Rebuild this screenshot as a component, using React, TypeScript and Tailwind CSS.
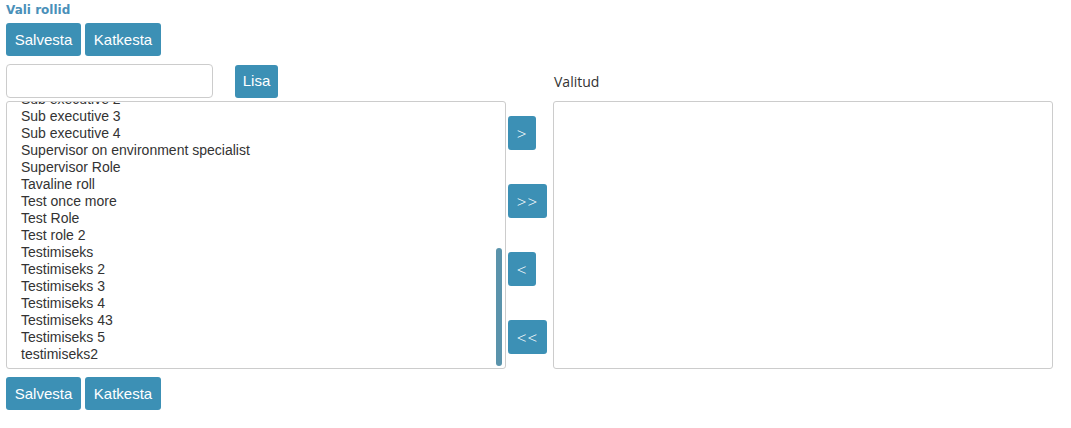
import React from 'react';

const roles = [
  'Sub executive 2',
  'Sub executive 3',
  'Sub executive 4',
  'Supervisor on environment specialist',
  'Supervisor Role',
  'Tavaline roll',
  'Test once more',
  'Test Role',
  'Test role 2',
  'Testimiseks',
  'Testimiseks 2',
  'Testimiseks 3',
  'Testimiseks 4',
  'Testimiseks 43',
  'Testimiseks 5',
  'testimiseks2',
];

const btn =
  'bg-[#3c90b5] text-white rounded-[3px] h-[33px] px-[8px] text-[15px] leading-none flex items-center justify-center';

const ActionRow: React.FC = () => (
  <div className="flex gap-[4px]">
    <button className={`${btn} w-[75px]`}>Salvesta</button>
    <button className={`${btn} w-[76px]`}>Katkesta</button>
  </div>
);

const MoveButton: React.FC<{ label: string; wide?: boolean }> = ({ label, wide }) => (
  <button
    className={`bg-[#3c90b5] text-white rounded-[3px] h-[34px] ${wide ? 'w-[39px]' : 'w-[28px]'} text-[17px] font-light leading-none tracking-[1px] flex items-center justify-center font-['Open_Sans',sans-serif]`}
  >
    {label}
  </button>
);

export default function App() {
  return (
    <div className="bg-white w-[1071px] h-[428px] pl-[6px] font-['Liberation_Sans',Arial,sans-serif]">
      <div className="h-[23px] pt-[1px] text-[12px] font-bold text-[#4a90b9] font-['DejaVu_Sans',Verdana,sans-serif]">
        Vali rollid
      </div>
      <ActionRow />

      <div className="grid grid-cols-[500px_47px_500px] grid-rows-[37px_268px] mt-[8px]">
        {/* search row */}
        <div className="flex items-start">
          <input
            className="w-[207px] h-[34px] border border-[#cccccc] rounded-[4px] outline-none"
            type="text"
          />
          <button className="bg-[#3c90b5] text-white rounded-[3px] h-[33px] w-[43px] ml-[22px] mt-[1px] text-[15px]">
            Lisa
          </button>
        </div>
        <div />
        <div className="text-[14px] text-[#333] font-['Open_Sans',sans-serif] pt-[7px] pl-[1px]">Valitud</div>

        {/* available list */}
        <div className="relative border border-[#cccccc] rounded-[3px] overflow-hidden">
          <div className="-mt-[11px] pl-[14px]">
            {roles.map((r) => (
              <div key={r} className="h-[17px] leading-[17px] text-[14px] text-[#333333] whitespace-nowrap">
                {r}
              </div>
            ))}
          </div>
          <div className="absolute right-[3px] top-[146px] w-[6px] h-[118px] rounded-full bg-[#5a93ab]" />
        </div>

        {/* move buttons */}
        <div className="flex flex-col gap-[34px] pt-[15px] pl-[2px]">
          <MoveButton label=">" />
          <MoveButton label=">>" wide />
          <MoveButton label="<" />
          <MoveButton label="<<" wide />
        </div>

        {/* selected list */}
        <div className="border border-[#cccccc] rounded-[3px]" />
      </div>

      <div className="mt-[8px]">
        <ActionRow />
      </div>
    </div>
  );
}
